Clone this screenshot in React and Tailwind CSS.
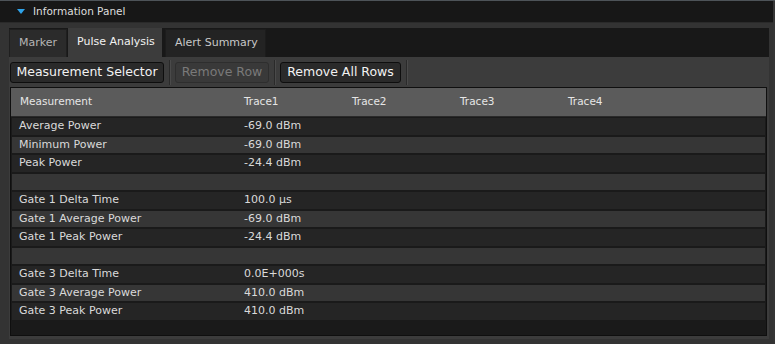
import React from "react";

const rows = [
  ["Average Power", "-69.0 dBm"],
  ["Minimum Power", "-69.0 dBm"],
  ["Peak Power", "-24.4 dBm"],
  ["", ""],
  ["Gate 1 Delta Time", "100.0 µs"],
  ["Gate 1 Average Power", "-69.0 dBm"],
  ["Gate 1 Peak Power", "-24.4 dBm"],
  ["", ""],
  ["Gate 3 Delta Time", "0.0E+000s"],
  ["Gate 3 Average Power", "410.0 dBm"],
  ["Gate 3 Peak Power", "410.0 dBm"],
];

function Sep() {
  return (
    <div className="flex h-[25px] ml-[5px] mr-[4px]">
      <div className="w-[1px] bg-[#2a2a2a]" />
      <div className="w-[1px] bg-[#4a4a4a]" />
    </div>
  );
}

export default function App() {
  return (
    <div className="w-[775px] h-[344px] bg-[#353535] overflow-hidden border-t border-[#4d5358] font-['DejaVu_Sans',sans-serif]">
      <div className="h-[21px] mr-[2px] bg-[#171717] flex items-center pl-[17px]">
        <svg width="8" height="5" viewBox="0 0 8 5">
          <polygon points="0,0 8,0 4,5" fill="#2ea3ea" />
        </svg>
        <span className="ml-[8px] text-[10.5px] text-[#dedede] leading-none">Information Panel</span>
      </div>
      <div className="mr-[2px] h-[322px] bg-[#333333] pt-[5px] pl-[9px] pr-[4px] border-t border-[#2a2a2a]">
        <div className="h-[29px] bg-[#181818] flex items-end">
          <div className="h-[28px] w-[58px] bg-[#2b2b2b] border border-b-0 border-[#1f1f1f] flex items-center pl-[9px] text-[11px] text-[#b5b5b5]">
            Marker
          </div>
          <div className="h-[29px] w-[94px] ml-[1px] bg-[#3c3c3c] flex items-center pl-[9px] text-[11px] text-[#f2f2f2]">
            Pulse Analysis
          </div>
          <div className="h-[28px] w-[101px] ml-[3px] bg-[#232323] border border-b-0 border-[#1c1c1c] flex items-center pl-[9px] text-[11px] text-[#c8c8c8]">
            Alert Summary
          </div>
        </div>
        <div className="bg-[#3c3c3c] pl-[1px] pr-[2px] pb-[3px]">
          <div className="h-[30px] flex items-center">
            <div className="h-[21px] w-[154px] rounded-[3px] border border-[#0e0e0e] bg-[#2a2a2a] flex items-center justify-center text-[12.5px] text-[#f2f2f2]">
              Measurement Selector
            </div>
            <Sep />
            <div className="h-[21px] w-[94px] rounded-[3px] border border-[#2e2e2e] bg-[#393939] flex items-center justify-center text-[12.5px] text-[#7a7a7a]">
              Remove Row
            </div>
            <Sep />
            <div className="h-[21px] w-[121px] rounded-[3px] border border-[#0e0e0e] bg-[#2a2a2a] flex items-center justify-center text-[12.5px] text-[#f2f2f2]">
              Remove All Rows
            </div>
            <Sep />
          </div>
          <div className="h-[249px] border border-[#0f0f0f] bg-[#1a1a1a]">
            <div className="h-[29px] bg-[#5b5b5b] border-b border-[#2a2a2a] flex items-center text-[10.5px] text-[#e6e6e6]">
              <div className="w-[225px] pl-[9px]">Measurement</div>
              <div className="w-[108px] pl-[8px]">Trace1</div>
              <div className="w-[108px] pl-[8px]">Trace2</div>
              <div className="w-[108px] pl-[8px]">Trace3</div>
              <div className="w-[108px] pl-[8px]">Trace4</div>
            </div>
            <div className="px-[1px] pt-[1px] flex flex-col gap-[2px]">
              {rows.map((r, i) => (
                <div
                  key={i}
                  className={
                    "h-[16.5px] flex items-center text-[11px] text-[#dadada] " +
                    (i % 2 === 0 ? "bg-[#252525]" : "bg-[#363636]")
                  }
                >
                  <div className="w-[224px] pl-[7px] whitespace-nowrap">{r[0]}</div>
                  <div className="w-[108px] pl-[8px] whitespace-nowrap">{r[1]}</div>
                </div>
              ))}
            </div>
          </div>
        </div>
      </div>
    </div>
  );
}
